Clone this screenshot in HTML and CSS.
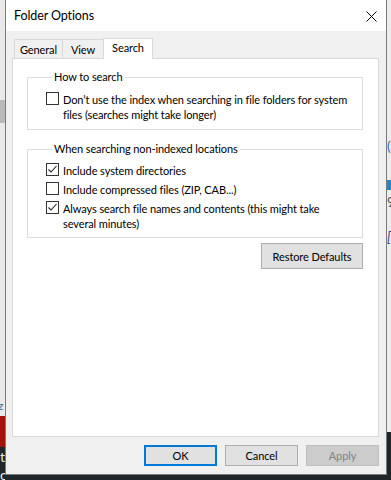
FILE: index.html
```html
<!DOCTYPE html>
<html lang="en">
<head>
  <meta charset="UTF-8" />
  <title>Folder Options</title>
  <link rel="stylesheet" href="styles.css">
</head>
<body>
  <div id="desktop">
    <div class="strip-left">
      <div class="strip-shade"></div>
      <div class="strip-z">z</div>
      <div class="strip-red"></div>
      <div class="strip-dark">t<br>oc</div>
    </div>
    <div class="strip-right">
      <div class="glyph paren">(</div>
      <div class="blue-bar"></div>
      <div class="glyph nine">9</div>
      <div class="glyph bracket">[2</div>
      <div class="strip-dark-r"></div>
    </div>

    <div id="dialog">
      <div id="titlebar">
        <span class="title">Folder Options</span>
        <svg class="close" width="11" height="11" viewBox="0 0 11 11">
          <path d="M0.5 0.5 L10.5 10.5 M10.5 0.5 L0.5 10.5" stroke="#000" stroke-width="1" fill="none" />
        </svg>
      </div>

      <div id="client">
        <div id="tabs">
          <div class="tab general">General</div>
          <div class="tab view">View</div>
          <div class="tab active">Search</div>
        </div>

        <div id="panel">
          <fieldset class="group first">
            <legend>How to search</legend>
            <div class="option">
              <span class="box"></span>
              <span class="label">Don’t use the index when searching in file folders for system files (searches might take longer)</span>
            </div>
          </fieldset>

          <fieldset class="group second">
            <legend>When searching non-indexed locations</legend>
            <div class="option">
              <span class="box checked"><svg width="11" height="11" viewBox="0 0 11 11"><path d="M1.5 5.5 L4 8 L9.5 2" stroke="#222" stroke-width="1.1" fill="none" /></svg></span>
              <span class="label">Include system directories</span>
            </div>
            <div class="option">
              <span class="box"></span>
              <span class="label">Include compressed files (ZIP, CAB...)</span>
            </div>
            <div class="option">
              <span class="box checked"><svg width="11" height="11" viewBox="0 0 11 11"><path d="M1.5 5.5 L4 8 L9.5 2" stroke="#222" stroke-width="1.1" fill="none" /></svg></span>
              <span class="label">Always search file names and contents (this might take several minutes)</span>
            </div>
          </fieldset>

          <div class="restore-row">
            <button class="btn restore">Restore Defaults</button>
          </div>
        </div>

        <div id="buttons">
          <button class="btn ok">OK</button>
          <button class="btn">Cancel</button>
          <button class="btn disabled">Apply</button>
        </div>
      </div>
    </div>
  </div>
</body>
</html>
```

FILE: styles.css
```css
body {
  margin: 0;
  padding: 0;
  font-family: Lato, "Liberation Sans", sans-serif;
  font-size: 11px;
  letter-spacing: -0.1px;
  color: #000;
}

#desktop {
  position: relative;
  width: 391px;
  height: 480px;
  overflow: hidden;
  background-color: #1f2629;
}

/* bits of other windows peeking out at the edges */
.strip-left {
  position: absolute;
  left: 0;
  top: 0;
  width: 5px;
  height: 480px;
  overflow: hidden;
  background-color: #e9e9e9;
}

.strip-shade {
  position: absolute;
  top: 100px;
  left: 0;
  width: 5px;
  height: 23px;
  background-color: #b9b9b9;
}

.strip-z {
  position: absolute;
  top: 398px;
  left: -2px;
  font-size: 12px;
  color: #3a6a8a;
}

.strip-red {
  position: absolute;
  top: 416px;
  left: 0;
  width: 5px;
  height: 31px;
  background-color: #a5120c;
}

.strip-dark {
  position: absolute;
  top: 447px;
  left: 0;
  width: 5px;
  height: 33px;
  background-color: #1f2629;
  color: #e8e8e8;
  font-size: 14px;
  line-height: 18px;
  padding-top: 1px;
  box-sizing: border-box;
}

.strip-right {
  position: absolute;
  left: 387px;
  top: 0;
  width: 4px;
  height: 480px;
  overflow: hidden;
  background-color: #ececec;
}

.glyph {
  position: absolute;
  left: 0;
  font-size: 13px;
}

.paren { top: 138px; color: #2a6ab0; }
.nine { top: 194px; color: #555; }
.bracket { top: 229px; color: #2a3a9a; font-style: italic; }

.blue-bar {
  position: absolute;
  top: 180px;
  left: 0;
  width: 4px;
  height: 10px;
  background-color: #1e88c8;
}

.strip-dark-r {
  position: absolute;
  top: 432px;
  left: 0;
  width: 4px;
  height: 48px;
  background-color: #1f2629;
}

#dialog {
  position: absolute;
  left: 5px;
  top: 0;
  width: 382px;
  height: 475px;
  box-sizing: border-box;
  border-left: 1px solid #7a7a7a;
  border-right: 1px solid #7a7a7a;
  border-bottom: 1px solid #7a7a7a;
  background-color: #f0f0f0;
  display: flex;
  flex-direction: column;
}

#titlebar {
  height: 31px;
  background-color: #fff;
  display: flex;
  align-items: center;
  justify-content: space-between;
  padding: 0 9px 0 8px;
  flex-shrink: 0;
}

.title {
  font-size: 12.5px;
  padding-bottom: 1px;
}

.close {
  margin-top: 1px;
}

#client {
  flex: 1;
  display: flex;
  flex-direction: column;
  padding: 7px 7px 8px 6px;
}

#tabs {
  display: flex;
  align-items: flex-end;
  height: 21px;
  padding-left: 2px;
  position: relative;
  z-index: 1;
  margin-bottom: -1px;
}

.tab {
  height: 19px;
  box-sizing: border-box;
  border: 1px solid #d9d9d9;
  border-bottom: none;
  background-color: #f0f0f0;
  padding-top: 3px;
  margin-bottom: 1px;
  text-align: center;
}

.tab.general {
  width: 49px;
}

.tab.view {
  width: 41px;
  border-left: none;
}

.tab.active {
  width: 50px;
  height: 21px;
  margin-bottom: 0;
  margin-left: -1px;
  background-color: #fff;
  padding-top: 2px;
}

#panel {
  height: 379px;
  box-sizing: border-box;
  background-color: #fff;
  border: 1px solid #d9d9d9;
  padding: 11px 15px 0 14px;
  display: flex;
  flex-direction: column;
}

.group {
  margin: 0;
  border: 1px solid #dcdcdc;
  padding: 0 11px 0 18px;
}

.group legend {
  margin-left: 6px;
  padding: 0 2px;
  line-height: 14px;
}

.group.first {
  height: 60px;
  box-sizing: border-box;
  padding-top: 7px;
}

.group.second {
  margin-top: 12px;
  height: 96px;
  box-sizing: border-box;
  padding-top: 6px;
}

.option {
  display: flex;
  align-items: flex-start;
  margin-bottom: 3px;
}

.box {
  width: 13px;
  height: 13px;
  box-sizing: border-box;
  border: 1px solid #333;
  background-color: #fff;
  flex-shrink: 0;
  margin-top: 1px;
  margin-right: 4px;
  display: flex;
  align-items: center;
  justify-content: center;
}

.label {
  line-height: 15px;
  padding-top: 1px;
}

.restore-row {
  display: flex;
  justify-content: flex-end;
  margin-top: 5px;
}

.btn {
  font-family: Lato, "Liberation Sans", sans-serif;
  font-size: 11px;
  letter-spacing: -0.1px;
  color: #000;
  background-color: #e1e1e1;
  border: 1px solid #adadad;
  box-sizing: border-box;
  padding: 0;
  width: 73px;
  height: 21px;
}

.restore {
  width: 102px;
  height: 26px;
}

#buttons {
  display: flex;
  justify-content: flex-end;
  gap: 8px;
  margin-top: 8px;
}

.btn.ok {
  border: 2px solid #0078d7;
}

.btn.disabled {
  background-color: #cccccc;
  border-color: #bfbfbf;
  color: #838383;
}
```
